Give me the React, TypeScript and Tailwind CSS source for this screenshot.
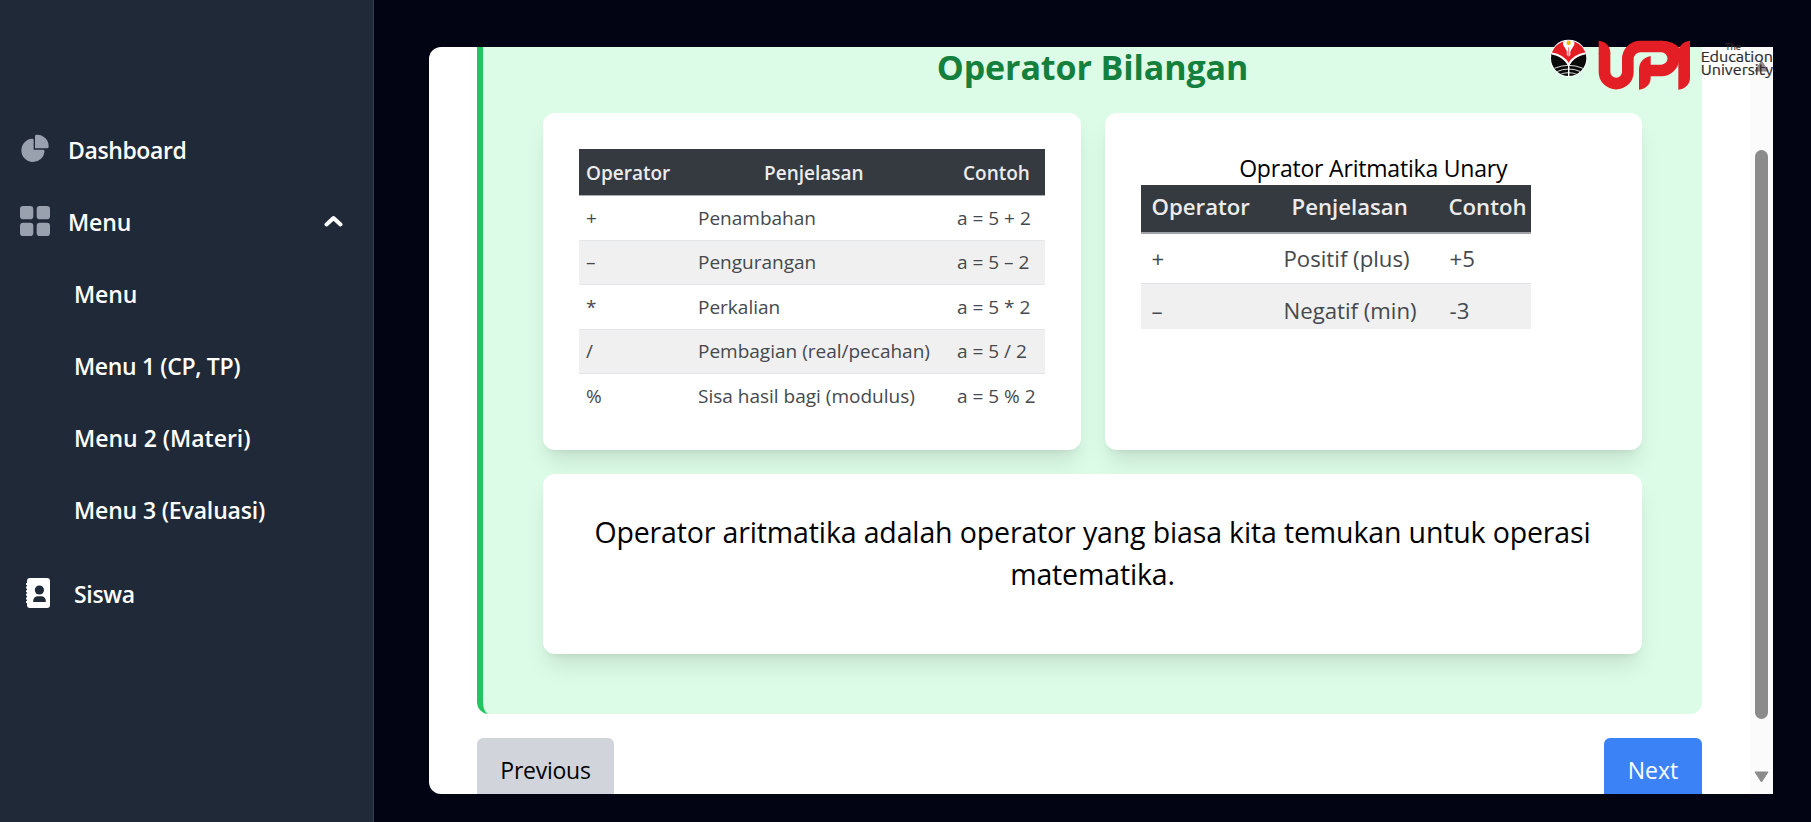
import type { ReactNode } from "react";

const binaryOperators = [
  { symbol: "+", name: "Penambahan", example: "a = 5 + 2" },
  { symbol: "–", name: "Pengurangan", example: "a = 5 – 2" },
  { symbol: "*", name: "Perkalian", example: "a = 5 * 2" },
  { symbol: "/", name: "Pembagian (real/pecahan)", example: "a = 5 / 2" },
  { symbol: "%", name: "Sisa hasil bagi (modulus)", example: "a = 5 % 2" },
];

const subMenu = [
  { label: "Menu", tracking: "tracking-[-0.1px]" },
  { label: "Menu 1 (CP, TP)", tracking: "tracking-[-0.35px]" },
  { label: "Menu 2 (Materi)", tracking: "tracking-[0px]" },
  { label: "Menu 3 (Evaluasi)", tracking: "tracking-[-0.15px]" },
];

function PieIcon() {
  return (
    <svg className="h-[30px] w-[30px] text-gray-400" viewBox="0 0 22 21" fill="currentColor">
      <path d="M16.975 11H10V4.025a1 1 0 0 0-1.066-.998 8.5 8.5 0 1 0 9.039 9.039.999.999 0 0 0-1-1.066h.002Z" />
      <path d="M12.5 0c-.157 0-.311.01-.565.027A1 1 0 0 0 11 1.02V10h8.975a1 1 0 0 0 1-.935c.013-.188.028-.374.028-.565A8.51 8.51 0 0 0 12.5 0Z" />
    </svg>
  );
}

function GridIcon() {
  return (
    <svg className="h-[30px] w-[30px] text-gray-400" viewBox="0 0 18 18" fill="currentColor">
      <rect width="8" height="8" rx="1.86" />
      <rect x="10" width="8" height="8" rx="1.86" />
      <rect y="10" width="8" height="8" rx="1.86" />
      <rect x="10" y="10" width="8" height="8" rx="1.86" />
    </svg>
  );
}

function ContactIcon() {
  return (
    <svg className="h-[30px] w-[24px]" viewBox="0 0 24 30">
      <rect x="1" width="23" height="30" rx="3" fill="#fff" />
      <path d="M1 5v20" stroke="#fff" strokeWidth="2" strokeDasharray="2 1.6" />
      <circle cx="13.4" cy="12" r="4.6" fill="#1f2937" />
      <path d="M7.2 24v-1.2a4.6 4.6 0 0 1 4.6-4.6h3.4a4.6 4.6 0 0 1 4.6 4.6V24Z" fill="#1f2937" />
    </svg>
  );
}

function Logo() {
  return (
    <svg className="h-[60px] w-[233px]" viewBox="0 0 699 180">
      <clipPath id="seal">
        <circle cx="86" cy="73" r="53" />
      </clipPath>
      <circle cx="86" cy="73" r="56" fill="#fff" />
      <g clipPath="url(#seal)">
        <path d="M28 15h116v48C116 63 98 74 86 88 74 74 56 63 28 63Z" fill="#e31e24" />
        <path d="M28 58C56 63 74 76 84 94v40H28Z M144 58C116 63 98 76 88 94v40h56Z" fill="#0a0a0a" />
        <path d="M69 15h34v17L92 50v12l-6 6-6-6V50L69 32Z" fill="#fff" />
        <path d="M86 40v38M81 52v14M91 52v14" stroke="#e31e24" strokeWidth="2" fill="none" />
        <circle cx="86" cy="27" r="6.5" fill="#f5b90a" />
        <path d="M30 57C60 61 78 76 86 92 94 76 112 61 142 57" stroke="#fff" strokeWidth="6" fill="none" />
        <path d="M86 88v40M43 103q43-18 86 0M50 113q36-16 72 0M59 122q27-12 54 0" stroke="#fff" strokeWidth="2.500" fill="none" />
      </g>
      <g fill="#e31e24">
        <path d="M176 20C198 22 211 38 211 56v4h-35Z" />
        <path
          d="M193.500 58V114A35 35 0 0 0 263.500 114V76A38 38 0 0 1 302 37.500H364A36 36 0 0 1 364 109.500H325"
          fill="none"
          stroke="#e31e24"
          strokeWidth="35"
        />
        <path d="M360 20C388 20 408 28 420 44l-6 50-30-40Z" />
        <path d="M332 66C310 70 297 86 297 106v61c21-2 35-17 35-35Z" />
        <path d="M450 20c-22 2-35 18-35 36v111c21-2 35-17 35-35Z" />
      </g>
      <g fill="#2b2b2b" stroke="#2b2b2b" strokeWidth="0.6" className="font-['Ubuntu','Open_Sans',sans-serif]">
        <text x="556" y="48" fontSize="30" textLength="47" lengthAdjust="spacingAndGlyphs">The</text>
        <text x="482" y="83" fontSize="43" textLength="217" lengthAdjust="spacingAndGlyphs">Education</text>
        <text x="482" y="123" fontSize="43" textLength="217" lengthAdjust="spacingAndGlyphs">University</text>
      </g>
    </svg>
  );
}

function Card({ className, children }: { className: string; children: ReactNode }) {
  return (
    <div
      className={
        "rounded-xl bg-white shadow-[0_15px_22.5px_-4.5px_rgb(0_0_0/0.1),0_6px_9px_-6px_rgb(0_0_0/0.1)] " + className
      }
    >
      {children}
    </div>
  );
}

function Sidebar() {
  return (
    <aside className="flex h-full w-[374px] shrink-0 flex-col border-r border-gray-700 bg-[#1f2937] pt-[114px] text-[23px] font-semibold tracking-[-0.1px] text-white">
      <div className="flex h-[72px] items-center pl-5">
        <div className="-mt-0.5">
          <PieIcon />
        </div>
        <span className="ml-[18px] tracking-[-0.4px]">Dashboard</span>
      </div>
      <div className="flex h-[72px] items-center pr-[30px] pl-5">
        <div className="-mt-0.5">
          <GridIcon />
        </div>
        <span className="ml-[18px]">Menu</span>
        <svg className="-mt-0.5 ml-auto h-[12px] w-[19px]" viewBox="0 0 19 12">
          <path d="M2.500 9.500 9.500 3l7 6.500" fill="none" stroke="#fff" strokeWidth="4" strokeLinecap="round" strokeLinejoin="round" />
        </svg>
      </div>
      {subMenu.map((item) => (
        <div key={item.label} className={"flex h-[72px] items-center pl-[74px] " + item.tracking}>
          {item.label}
        </div>
      ))}
      <div className="mt-3 flex h-[72px] items-center pl-[26px]">
        <div className="-mt-0.5">
          <ContactIcon />
        </div>
        <span className="ml-[24px] tracking-[-0.3px]">Siswa</span>
      </div>
    </aside>
  );
}

function BinaryTable() {
  return (
    <div className="w-[466px] text-[19px] text-[#45494e]">
      <div className="grid h-[47px] grid-cols-[111px_279px_76px] items-center border-b border-[#a9adb1] bg-[#343a40] pt-[2px] font-semibold text-[#ececec]">
        <span className="pl-[7px]">Operator</span>
        <span className="pl-[74px]">Penjelasan</span>
        <span className="-ml-[6px]">Contoh</span>
      </div>
      {binaryOperators.map((row) => (
        <div
          key={row.symbol}
          className="grid h-[44.600px] grid-cols-[111px_260px_95px] items-center border-b border-[#e3e6e9] last:border-0 even:bg-white odd:bg-[#f0f0f0]"
        >
          <span className="pl-[7px]">{row.symbol}</span>
          <span className="pl-[8px]">{row.name}</span>
          <span className="pl-[7px]">{row.example}</span>
        </div>
      ))}
    </div>
  );
}

function UnaryTable() {
  return (
    <div className="w-[390px] overflow-hidden text-[22.200px] text-[#45494e]">
      <div className="grid h-[49px] grid-cols-[142px_166px_82px] items-center border-b-2 border-[#a0a4a8] bg-[#343a40] pb-[3px] font-semibold text-[#ececec]">
        <span className="pl-[11px]">Operator</span>
        <span className="pl-[9px]">Penjelasan</span>
        <span>Contoh</span>
      </div>
      <div className="grid h-[50px] grid-cols-[142px_166px_82px] items-center border-b border-[#e0e3e6] bg-white">
        <span className="pl-[11px]">+</span>
        <span className="pl-px">Positif (plus)</span>
        <span className="pl-px">+5</span>
      </div>
      <div className="grid h-[45px] grid-cols-[142px_166px_82px] items-center bg-[#f0f0f0] pt-[9px]">
        <span className="pl-[11px]">–</span>
        <span className="pl-px">Negatif (min)</span>
        <span className="pl-px">-3</span>
      </div>
    </div>
  );
}

export default function App() {
  return (
    <div className="relative flex h-[822px] w-[1811px] overflow-hidden bg-[#020414] font-['Segoe_UI','Open_Sans','Noto_Sans',sans-serif] text-black">
      <Sidebar />

      <main className="flex-1 pt-[47px] pr-[38px] pb-[28px] pl-[55px]">
        <div className="flex h-[747px] overflow-hidden rounded-l-xl bg-white">
          <div className="flex flex-1 flex-col pr-12 pl-12">
            <section className="h-[667px] shrink-0 rounded-b-xl border-l-6 border-[#22c55e] bg-[#dcfce7] pr-[60px] pl-[60px]">
              <h1 className="mb-[26px] text-center text-[34px] leading-[40px] font-bold tracking-[-0.1px] text-[#15803d]">
                Operator Bilangan
              </h1>
              <div className="grid grid-cols-2 gap-6">
                <Card className="h-[337px] p-9">
                  <BinaryTable />
                </Card>
                <Card className="h-[337px] p-9">
                  <p className="-mb-px pt-px text-center text-[23px] leading-9 tracking-[-0.2px]">
                    Oprator Aritmatika Unary
                  </p>
                  <UnaryTable />
                </Card>
              </div>
              <Card className="mt-6 h-[180px] px-9 pt-[37px]">
                <p className="text-center text-[28.500px] leading-[42px] tracking-[-0.14px]">
                  Operator aritmatika adalah operator yang biasa kita temukan untuk operasi matematika.
                </p>
              </Card>
            </section>
            <div className="mt-6 flex shrink-0 justify-between text-[23px] leading-9">
              <button className="h-[72px] w-[137px] rounded-md bg-[#d1d5db] pb-[8px] tracking-[-0.25px]">Previous</button>
              <button className="h-[72px] w-[98px] rounded-md bg-[#3b82f6] pb-[8px] text-white">Next</button>
            </div>
          </div>

          <div className="flex w-[23px] flex-col items-center bg-[#fbfbfb] pt-[13px] pb-[11px]">
            <svg className="h-[12px] w-[15px]" viewBox="0 0 15 12">
              <path d="M7.500 1 14 11H1Z" fill="#8b8b8b" stroke="#8b8b8b" strokeLinejoin="round" />
            </svg>
            <div className="mt-[78px] h-[569px] w-[13px] rounded-full bg-[#8b8b8b]" />
            <svg className="mt-auto h-[12px] w-[15px]" viewBox="0 0 15 12">
              <path d="M7.500 11 14 1H1Z" fill="#8b8b8b" stroke="#8b8b8b" strokeLinejoin="round" />
            </svg>
          </div>
        </div>
      </main>

      <div className="absolute top-[34px] right-[38px]">
        <Logo />
      </div>
    </div>
  );
}
